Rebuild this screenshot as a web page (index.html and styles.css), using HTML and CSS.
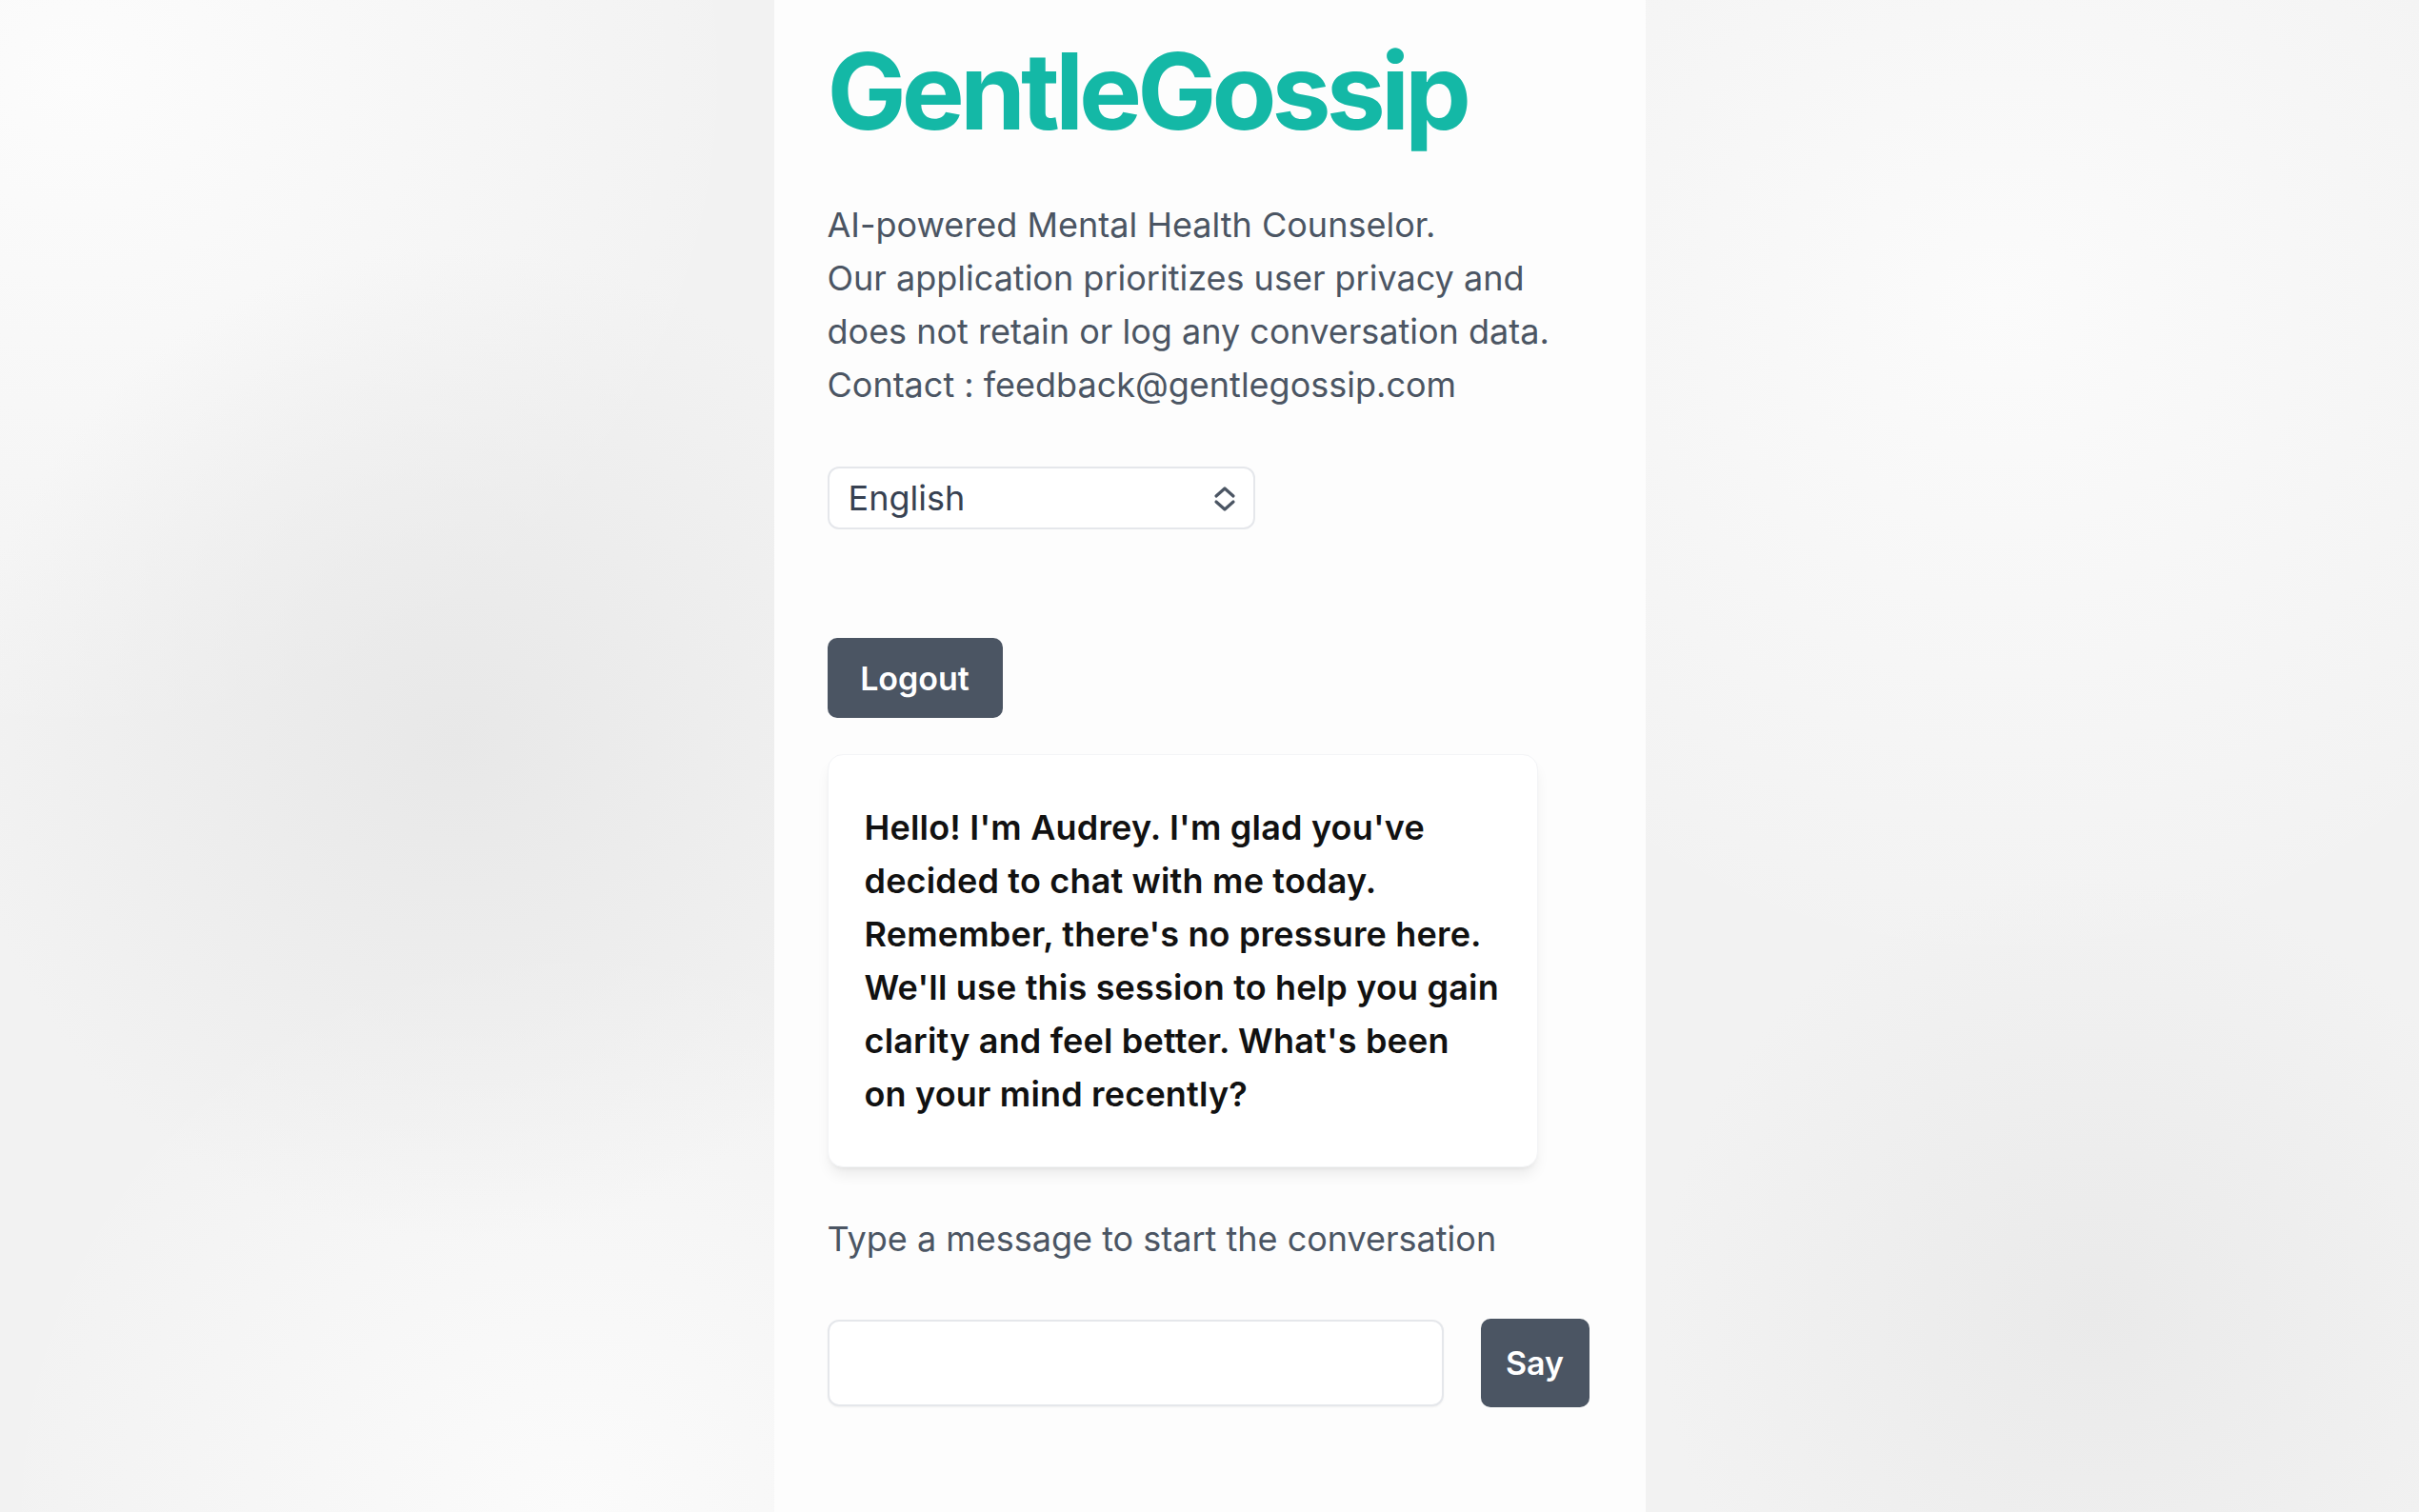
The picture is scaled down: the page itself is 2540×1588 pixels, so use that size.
FILE: index.html
```html
<!DOCTYPE html>
<html lang="en">
<head>
  <meta charset="UTF-8">
  <meta name="viewport" content="width=device-width, initial-scale=1.0">
  <title>GentleGossip</title>
  <link rel="stylesheet" href="styles.css">
</head>
<body>
  <main class="app">
    <h1 class="brand">GentleGossip</h1>

    <p class="intro">
      AI-powered Mental Health Counselor.<br>
      Our application prioritizes user privacy and does not retain or log any conversation data.<br>
      Contact : feedback@gentlegossip.com
    </p>

    <div class="lang">
      <select id="language" name="language">
        <option value="en" selected>English</option>
        <option value="ko">한국어</option>
        <option value="ja">日本語</option>
      </select>
      <svg class="lang-arrows" width="24" height="28" viewBox="0 0 24 28" fill="none" stroke="#4b5563" stroke-width="3.2" stroke-linecap="round" stroke-linejoin="round">
        <path d="M3 11 L12 3 L21 11"/>
        <path d="M3 17 L12 25 L21 17"/>
      </svg>
    </div>

    <button class="btn logout" type="button">Logout</button>

    <div class="bubble">
      <p>Hello! I'm Audrey. I'm glad you've decided to chat with me today. Remember, there's no pressure here. We'll use this session to help you gain clarity and feel better. What's been<br>on your mind recently?</p>
    </div>

    <p class="hint">Type a message to start the conversation</p>

    <form class="composer" onsubmit="return false">
      <input type="text" id="message" name="message">
      <button class="btn say" type="submit">Say</button>
    </form>
  </main>
</body>
</html>
```

FILE: styles.css
```css
body {
  margin: 0;
  min-height: 100vh;
  font-family: Inter, "Noto Sans", sans-serif;
  background:
    radial-gradient(circle at 480px 780px, #e8e8e8 0, rgba(232, 232, 232, 0) 520px),
    radial-gradient(circle at 2200px 1380px, #eaeaea 0, rgba(234, 234, 234, 0) 460px),
    radial-gradient(circle at 80px 80px, #fcfcfc 0, rgba(252, 252, 252, 0) 700px),
    radial-gradient(circle at 2100px 320px, #fbfbfb 0, rgba(251, 251, 251, 0) 700px),
    radial-gradient(circle at 600px 1588px, #fbfbfb 0, rgba(251, 251, 251, 0) 600px),
    #f2f2f2;
}
.app {
  width: 915px;
  min-height: 100vh;
  box-sizing: border-box;
  margin: 0 auto;
  padding: 40px 56px 60px;
  background: #fdfdfd;
}
.brand {
  margin: 0;
  font-size: 111px;
  line-height: 1;
  font-weight: 700;
  letter-spacing: -0.045em;
  color: #14b8a6;
}
.intro {
  margin: 57px 0 0;
  font-size: 36px;
  line-height: 56px;
  color: #4b5563;
}
.lang {
  position: relative;
  width: 449px;
  margin-top: 58px;
}
.lang select {
  display: block;
  width: 100%;
  height: 66px;
  padding: 0 0 0 20px;
  appearance: none;
  border: 2px solid #e5e7eb;
  border-radius: 12px;
  background: #fff;
  font-family: inherit;
  font-size: 36px;
  color: #374151;
}
.lang-arrows {
  position: absolute;
  top: 20px;
  right: 20px;
  pointer-events: none;
}
.btn {
  border: none;
  border-radius: 10px;
  background: #4b5563;
  color: #fff;
  font-family: inherit;
  font-size: 34px;
  font-weight: 600;
  cursor: pointer;
}
.btn:hover {
  background: #374151;
}
.logout {
  display: block;
  width: 184px;
  height: 84px;
  margin-top: 114px;
}
.bubble {
  width: 746px;
  box-sizing: border-box;
  margin-top: 38px;
  padding: 48px 36px 48px 38px;
  border: 1px solid #f3f4f6;
  border-radius: 16px;
  background: #fff;
  box-shadow: 0 10px 15px -3px rgba(0, 0, 0, 0.08), 0 4px 6px -4px rgba(0, 0, 0, 0.08);
}
.bubble p {
  margin: 0;
  font-size: 36px;
  line-height: 56px;
  font-weight: 600;
  letter-spacing: 0.005em;
  color: #111;
}
.hint {
  margin: 47px 0 0;
  font-size: 36px;
  line-height: 56px;
  color: #4b5563;
}
.composer {
  display: flex;
  align-items: center;
  gap: 39px;
  margin-top: 56px;
}
.composer input {
  width: 647px;
  height: 91px;
  box-sizing: border-box;
  border: 2px solid #e5e7eb;
  border-radius: 12px;
  box-shadow: 0 1px 2px rgba(0, 0, 0, 0.05);
  font-family: inherit;
  font-size: 36px;
  padding: 0 20px;
}
.say {
  width: 114px;
  height: 93px;
}
```
